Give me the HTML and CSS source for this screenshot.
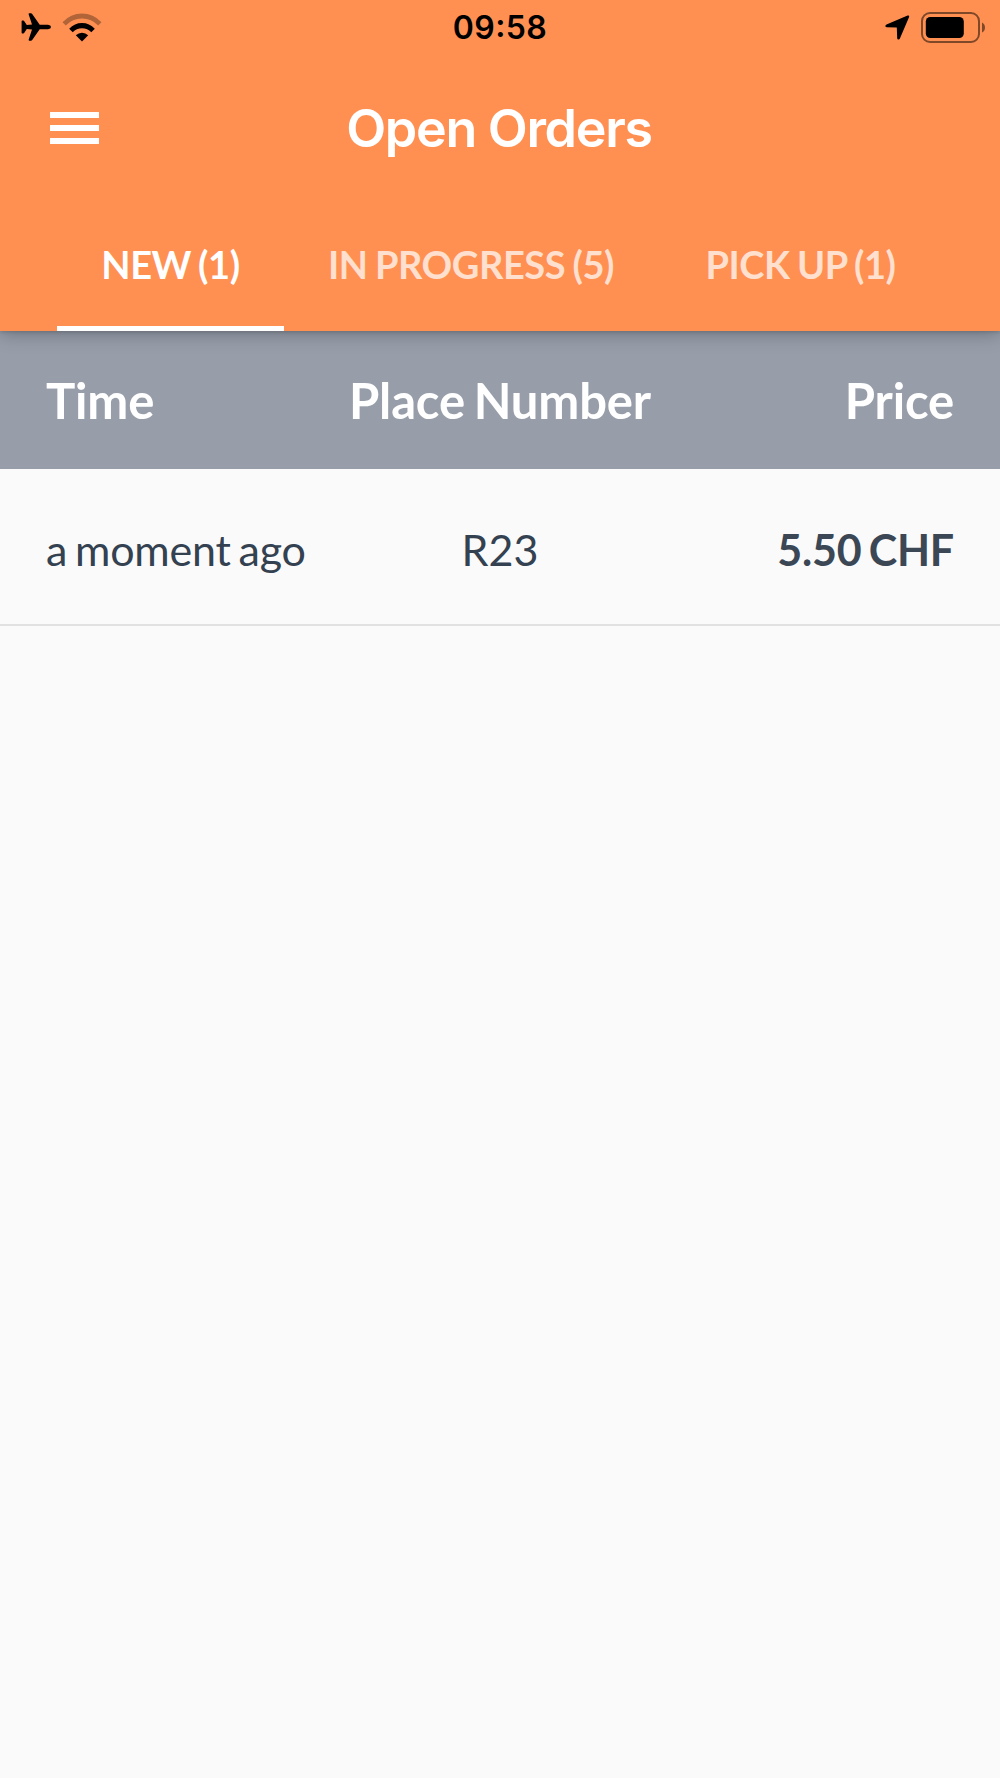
FILE: index.html
```
<!DOCTYPE html>
<html lang="en">
<head>
  <meta charset="UTF-8" />
  <title>Open Orders</title>
  <link rel="stylesheet" href="styles.css">
</head>
<body>
<header class="header">
  <!-- Status bar -->
  <div class="status-bar">
    <div class="status-left">
      <svg width="30" height="28" viewBox="0 0 30 28">
        <path d="M27 11.7H18.7L11.4 1.2Q10.8.3 9.8.3H8.3Q7.3.3 7.7 1.4L11 11.4 5.8 12 3.3 8.3Q3 7.6 2.2 7.6H1.3Q.6 7.6.6 8.3V19.7Q.6 20.4 1.3 20.4H2.2Q3 20.4 3.3 19.7L5.8 16 11 16.6 7.7 26.6Q7.3 27.7 8.3 27.7H9.8Q10.8 27.7 11.4 26.8L18.7 16.3H27Q30 15.8 30 14T27 11.7Z"/>
      </svg>
      <svg width="40" height="29" viewBox="0 0 40 29">
        <path d="M.5 9.2Q8.5.5 20 .5T39.5 9.2L36.2 12.5Q29.5 5.5 20 5.5T3.8 12.5Z" opacity=".3"/>
        <path d="M7.2 15.8Q12.5 10 20 10T32.8 15.8L29.3 19.2Q25.5 15.2 20 15.2T10.7 19.2Z"/>
        <path d="M13.8 22.3Q16.5 19.7 20 19.7T26.2 22.3L20 28.5Z"/>
      </svg>
    </div>
    <div class="clock">09<span class="colon">:</span>58</div>
    <div class="status-right">
      <svg width="25" height="25" viewBox="0 0 25 25">
        <path d="M22.6.6 1.5 9.5C-.2 10.3.1 12.2 1.7 12.2L11.8 12.4 12.2 22.9C12.3 24.8 14.3 24.9 14.9 23.4L24 2.3C24.500 1 23.8.1 22.6.6Z"/>
      </svg>
      <svg width="64" height="31" viewBox="0 0 64 31">
        <rect x="1" y="1" width="57" height="29" rx="8" fill="none" stroke="#000" stroke-width="2" opacity=".5"/>
        <rect x="4.8" y="5" width="38" height="21" rx="4.5"/>
        <path d="M61 10.5Q64 12 64 15.5T61 20.5Z" opacity=".5"/>
      </svg>
    </div>
  </div>

  <!-- App bar -->
  <div class="app-bar">
    <button class="menu-button" aria-label="Menu">
      <span></span>
      <span></span>
      <span></span>
    </button>
    <h1 class="title">Open Orders</h1>
  </div>

  <!-- Tabs -->
  <nav class="tabs">
    <a class="tab tab-new active">NEW (1)</a>
    <a class="tab tab-progress">IN PROGRESS (5)</a>
    <a class="tab tab-pickup">PICK UP (1)</a>
  </nav>
</header>

<main>
  <div class="row row-head">
    <div>Time</div>
    <div>Place Number</div>
    <div>Price</div>
  </div>
  <div class="row row-order">
    <div>a moment ago</div>
    <div class="place">R23</div>
    <div class="price">5.50 CHF</div>
  </div>
</main>
</body>
</html>
```
FILE: styles.css
```
body {
  margin: 0;
  min-height: 1778px;
  background-color: #fafafa;
  font-family: Lato, sans-serif;
  color: #334150;
}
.header {
  position: relative;
  height: 331px;
  background-color: #ff9052;
  box-shadow: 0 2px 18px rgba(0, 0, 0, 0.3), 0 1px 3px rgba(0, 0, 0, 0.15);
}

/* Status bar */
.status-bar {
  display: grid;
  grid-template-columns: 1fr auto 1fr;
  align-items: center;
  height: 54px;
  padding: 0 15px;
  box-sizing: border-box;
}
.status-left,
.status-right {
  display: flex;
  align-items: center;
}
.status-left {
  gap: 11px;
  padding-left: 6px;
}
.status-right {
  justify-content: flex-end;
  gap: 11px;
}
.clock {
  padding-top: 2px;
  font-family: Inter, sans-serif;
  font-size: 32px;
  font-weight: 600;
  line-height: 52px;
  letter-spacing: 0.4px;
  color: #000;
}
.colon {
  vertical-align: 2px;
  line-height: 1;
}

/* App bar */
.app-bar {
  display: grid;
  grid-template-columns: 50px 1fr 52px;
  align-items: center;
  height: 148px;
  padding: 0 50px;
}
.menu-button {
  display: flex;
  flex-direction: column;
  gap: 7px;
  padding: 0;
  border: none;
  background: none;
}
.menu-button span {
  width: 49px;
  height: 6px;
  background-color: #fff;
}
.title {
  margin: 0;
  text-align: center;
  font-family: Inter, sans-serif;
  font-size: 52px;
  font-weight: 600;
  letter-spacing: -1.3px;
  color: #fff;
}

/* Tabs */
.tabs {
  display: flex;
  justify-content: center;
  height: 129px;
}
.tab {
  box-sizing: border-box;
  border-bottom: 5px solid transparent;
  text-align: center;
  font-size: 38px;
  font-weight: 700;
  line-height: 124px;
  letter-spacing: -0.45px;
  word-spacing: -1.5px;
  white-space: nowrap;
  color: rgba(255, 255, 255, 0.73);
}
.tab-new {
  width: 227px;
}
.tab-progress {
  width: 374px;
}
.tab-pickup {
  width: 285px;
}
.tab.active {
  border-bottom-color: #fff;
  color: #fff;
}

/* Order list */
.row {
  display: grid;
  grid-template-columns: 1fr auto 1fr;
  padding: 0 46px;
}
.row div:last-child {
  text-align: right;
}
.row-head {
  background-color: #979eaa;
  font-size: 49px;
  font-weight: 700;
  line-height: 138px;
  letter-spacing: -0.15px;
  word-spacing: -3px;
  color: #fff;
}
.row-order {
  padding-top: 6px;
  border-bottom: 2px solid #e1e1e1;
  font-size: 43px;
  line-height: 149px;
  letter-spacing: -0.2px;
  word-spacing: -3px;
}
.place {
  letter-spacing: 0;
}
.price {
  font-weight: 700;
  color: #3b4754;
}
```
